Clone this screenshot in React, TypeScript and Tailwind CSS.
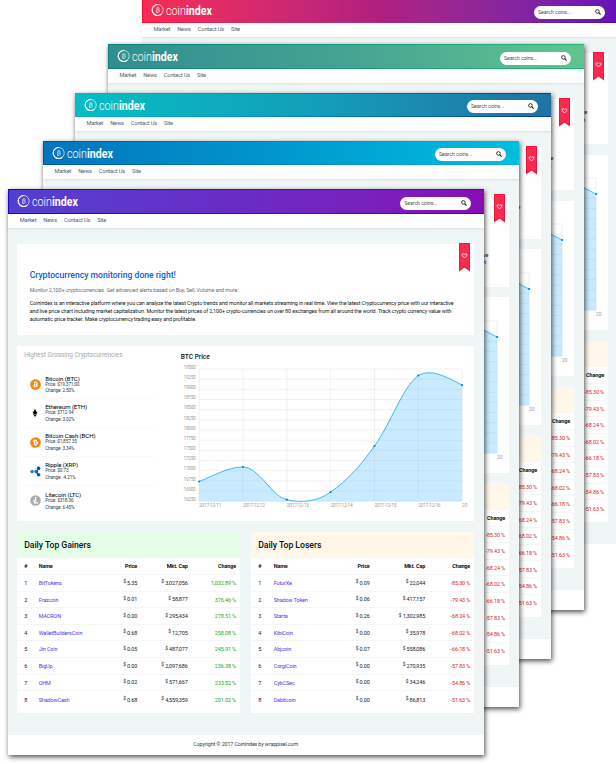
import React from "react";
import { FaBitcoin, FaEthereum } from "react-icons/fa";

type Theme = { pos: string; edge: string; fill: string; z: string };

const themes: Theme[] = [
  { pos: "left-[141.5px] top-[-2px]", edge: "from-[#ff0a35] to-[#5800a8]", fill: "from-[#f92c53] via-[#b01f80] to-[#6510b8]", z: "" },
  { pos: "left-[107.5px] top-[44px]", edge: "from-[#0c7f7c] to-[#22b877]", fill: "from-[#2f8f90] via-[#45a392] to-[#61c48f]", z: "shadow-[1px_2px_5px_rgba(0,0,0,0.7)]" },
  { pos: "left-[74.5px] top-[92.5px]", edge: "from-[#00bdc4] to-[#00409a]", fill: "from-[#05bdc4] via-[#129fb9] to-[#2072a5]", z: "shadow-[1px_2px_5px_rgba(0,0,0,0.7)]" },
  { pos: "left-[42.5px] top-[140.5px]", edge: "from-[#004fb5] to-[#00b5df]", fill: "from-[#0674bc] via-[#0098cd] to-[#00bfde]", z: "shadow-[1px_2px_5px_rgba(0,0,0,0.7)]" },
  { pos: "left-[7.7px] top-[189px]", edge: "from-[#1a08c4] to-[#5a00b4]", fill: "from-[#5140d0] via-[#6a2bc5] to-[#860db4]", z: "shadow-[1px_2px_5px_rgba(0,0,0,0.7)]" },
];

const gainers = [
  ["BitTokens", "5.35", "3,027,056", "1,032.89 %"],
  ["Frazcoin", "0.01", "58,877", "376.46 %"],
  ["MACRON", "0.00", "295,434", "278.51 %"],
  ["WalletBuildersCoin", "0.68", "12,705", "258.08 %"],
  ["Jin Coin", "0.05", "487,077", "245.91 %"],
  ["BigUp", "0.00", "2,097,686", "236.38 %"],
  ["OHM", "0.02", "571,667", "233.52 %"],
  ["ShadowCash", "0.68", "4,559,359", "201.02 %"],
];
const losers = [
  ["FuturXe", "0.09", "22,044", "-85.30 %"],
  ["Shadow Token", "0.06", "417,157", "-79.43 %"],
  ["Starta", "0.26", "1,302,985", "-68.24 %"],
  ["KibiCoin", "0.00", "35,978", "-68.02 %"],
  ["Abjcoin", "0.07", "558,086", "-66.18 %"],
  ["CorgiCoin", "0.00", "270,935", "-57.83 %"],
  ["CybCSec", "0.00", "34,246", "-54.86 %"],
  ["Debitcoin", "0.00", "86,813", "-51.63 %"],
];

function Logo() {
  return (
    <svg className="ml-[8px] block h-[16px] w-[66px]" viewBox="0 0 66 16">
      <circle cx="6.7" cy="8" r="5.5" fill="none" stroke="#fff" strokeWidth="0.8" opacity="0.85" />
      <path d="M6.7 2.5A5.5 5.5 0 1 0 10.4 12.1" fill="none" stroke="#fff" strokeWidth="1.1" />
      <path d="M5.6 6h1.7c1.5 0 1.5 1.9 0 2H5.7M7.3 8c1.7.1 1.6 2.2 0 2.2H5M6 5.9 5.4 10.2M7 5v.9M6.6 10.2v.9" fill="none" stroke="#fff" strokeWidth="0.55" />
      <text x="15" y="12.6" fontFamily="Roboto" fontSize="12" fill="#fff" fontWeight="300" textLength="20" lengthAdjust="spacingAndGlyphs">coin</text>
      <text x="35" y="12.6" fontFamily="Roboto" fontSize="12" fill="#fff" fontWeight="700" textLength="26" lengthAdjust="spacingAndGlyphs">index</text>
    </svg>
  );
}

function Header({ t }: { t: Theme }) {
  return (
    <div className={`h-[24.5px] bg-linear-to-r py-px pl-px ${t.edge}`}>
      <div className={`flex h-full items-center justify-between bg-linear-to-r ${t.fill}`}>
        <Logo />
        <div className="mr-[13px] mt-[4px] flex h-[13px] w-[71px] items-center justify-between rounded-full bg-white pl-[4.5px] pr-[4px]">
          <span className="text-[5.3px] leading-none tracking-[-0.09px] text-[#555]">Search coins...</span>
          <svg className="-mt-px size-[6px]" viewBox="0 0 6 6" fill="none" stroke="#222">
            <circle cx="2.4" cy="2.4" r="1.8" strokeWidth="0.9" />
            <path d="M3.7 3.7 5.6 5.6" strokeWidth="1.1" />
          </svg>
        </div>
      </div>
    </div>
  );
}

function Nav() {
  return (
    <div className="flex h-[14px] items-center gap-[7px] bg-white pl-[12px] text-[5.7px] leading-none tracking-[-0.17px] text-[#56616d] shadow-[0_1px_2px_rgba(0,0,0,0.09)]">
      <span>Market</span>
      <span>News</span>
      <span>Contact Us</span>
      <span>Site</span>
    </div>
  );
}

function Ribbon() {
  return (
    <svg className="absolute right-[4px] top-[-1px] h-[29px] w-[11px]" viewBox="0 0 11 29">
      <path d="M0 0H11V28.5L5.5 24.5 0 28.5Z" fill="#fb1238" />
      <path d="M1 1H10V26L5.5 23 1 26Z" fill="#f82a50" />
      <path d="M5.5 15 3.3 12.7C2.3 11.3 4.3 9.8 5.5 11.5 6.7 9.8 8.7 11.3 7.7 12.7Z" fill="none" stroke="#fff" strokeWidth="0.8" />
    </svg>
  );
}

function Intro() {
  return (
    <section className="relative h-[91.5px] bg-white pl-[12.5px] pt-[26.5px]">
      <Ribbon />
      <h1 className="text-[8.6px] font-medium leading-[11px] text-[#0a60d0]">Cryptocurrency monitoring done right!</h1>
      <p className="mt-[4.5px] whitespace-nowrap text-[5.4px] leading-[8px] tracking-[-0.11px] text-[#66717c]">Monitor 2,100+ cryptocurrencies. Get advanced alerts based on Buy, Sell, Volume and more.</p>
      <p className="mt-[6.5px] whitespace-nowrap text-[5.4px] leading-[7.75px] tracking-[-0.11px] text-[#101820]">
        CoinIndex is an interactive platform where you can analyze the latest Crypto trends and monitor all markets streaming in real time. View the latest Cryptocurrency price with our interactive<br />
        and live price chart including market capitalization. Monitor the latest prices of 2,100+ crypto-currencies on over 80 exchanges from all around the world. Track crypto currency value with<br />
        automatic price tracker. Make cryptocurrency trading easy and profitable.
      </p>
    </section>
  );
}

const Ripple = () => (
  <svg className="size-[11px]" viewBox="0 0 11 11">
    <path d="M6.6 5.6 8 3M6.6 5.6 8 8.6" stroke="#1467b0" strokeWidth="1.2" fill="none" />
    <circle cx="2.1" cy="5.6" r="1.8" fill="#1689d0" />
    <circle cx="6.3" cy="5.6" r="1.9" fill="#1467b0" />
    <circle cx="8.6" cy="2.4" r="1.8" fill="#0c4da0" />
    <circle cx="8.6" cy="8.7" r="1.8" fill="#1058b0" />
  </svg>
);

const Litecoin = () => (
  <svg className="size-[11px]" viewBox="0 0 11 11">
    <circle cx="5.5" cy="5.5" r="5.3" fill="#adadad" />
    <path d="M5.9 2 4.5 7.9H8M3.2 6.3 6.6 4.9" stroke="#fff" strokeWidth="1.1" fill="none" />
  </svg>
);

const coins = [
  { name: "Bitcoin (BTC)", price: "$19,371.00", change: "2.50%", icon: <FaBitcoin className="size-[11px] text-[#f7850f]" /> },
  { name: "Ethereum (ETH)", price: "$712.94", change: "3.02%", icon: <FaEthereum className="size-[8px] text-black" /> },
  { name: "Bitcoin Cash (BCH)", price: "$1,857.35", change: "3.34%", icon: <FaBitcoin className="size-[11px] -rotate-30 text-[#f7850f]" /> },
  { name: "Ripple (XRP)", price: "$0.73", change: "-4.21%", icon: <Ripple /> },
  { name: "Litecoin (LTC)", price: "$318.36", change: "6.45%", icon: <Litecoin /> },
];

function Coins() {
  return (
    <div className="w-[163.5px] pl-[7px] pt-[5.5px]">
      <h2 className="text-[6.5px] leading-[8px] tracking-[-0.07px] text-[#a0abb1]">Highest Grossing Cryptocurrencies</h2>
      <div className="mt-[11.5px] w-[132px]">
        {coins.map((c) => (
          <div key={c.name} className="flex h-[28.9px] items-center border-b border-[#f7f9fa] pl-[5.5px] last:border-0">
            <div className="flex w-[11px] justify-center">{c.icon}</div>
            <div className="ml-[4.5px] pt-px text-[4.7px] leading-[6.9px] tracking-[-0.12px] text-[#2c3c50]">
              <div className="text-[6.1px] leading-[7px] tracking-[-0.09px] text-black">{c.name}</div>
              <div>Price: {c.price}</div>
              <div>Change: {c.change}</div>
            </div>
          </div>
        ))}
      </div>
    </div>
  );
}

const points = [[0, 112.5], [43.8, 98], [87.7, 130.7], [131.5, 123], [175.4, 77], [219.2, 6.5], [263, 16]];
const curve = "C14 107 29 98 43.8 98C60 98 72 127 87.7 130.7C102 134 118 133 131.5 123C148 112 162 96 175.4 77C192 54 203 19 219.2 6.5C233 -1 249 9 263 16";

function Chart() {
  return (
    <div className="pt-[7.5px]">
      <h2 className="text-[6.6px] font-medium leading-[8px] text-[#111]">BTC Price</h2>
      <svg className="block h-[152px] w-[290px]" viewBox="0 0 290 152">
        <g transform="translate(18.1 8)">
          <g stroke="#ededed" strokeWidth="0.8">
            {Array.from({ length: 14 }, (_, i) => (
              <path key={i} d={`M0 ${i * 10.17}H263`} />
            ))}
            {points.map(([x]) => (
              <path key={x} d={`M${x} 0V132.2`} />
            ))}
          </g>
          <path d={`M0 112.5${curve}V132.2H0Z`} fill="#5abfff" opacity="0.33" />
          <path d={`M0 112.5${curve}`} fill="none" stroke="#2fb0f2" strokeWidth="0.9" />
          {points.map(([x, y]) => (
            <circle key={x} cx={x} cy={y} r="1.1" fill="#0782e0" />
          ))}
          <g fontFamily="Roboto" fontSize="4.8" fill="#a0a0a0">
            {Array.from({ length: 14 }, (_, i) => (
              <text key={i} x="-3.3" y={i * 10.17 - 0.3} textAnchor="end" textLength="12.3">{19500 - i * 250}</text>
            ))}
            {[11, 12, 13, 14, 15, 16].map((d, i) => (
              <text key={d} x={i * 43.85} y="137.9" textLength="22">{`2017-12-${d}`}</text>
            ))}
            <text x="263" y="137.9">20</text>
          </g>
        </g>
      </svg>
    </div>
  );
}

function Ranking({ title, rows, tint, tone, cols, width }: { title: string; rows: string[][]; tint: string; tone: string; cols: string; width: string }) {
  return (
    <section className={`h-[181.5px] bg-white ${width}`}>
      <h2 className={`flex h-[26.5px] items-center pl-[7px] pt-[2px] text-[8.7px] font-medium leading-none tracking-[-0.05px] text-[#0b120b] ${tint}`}>{title}</h2>
      <div className={`grid h-[17px] items-center border-b border-[#f5f7f7] pt-[2px] text-[5.5px] font-bold leading-none tracking-[-0.15px] text-[#111] ${cols}`}>
        <span>#</span>
        <span>Name</span>
        <span className="text-right">Price</span>
        <span className="text-right">Mkt. Cap</span>
        <span className="text-right">Change</span>
      </div>
      {rows.map((r, i) => (
        <div key={r[0]} className={`grid h-[16.6px] items-center whitespace-nowrap border-b border-[#f5f7f7] pt-[2px] text-[5.5px] leading-none tracking-[-0.14px] text-[#1a222a] last:border-0 ${cols}`}>
          <span>{i + 1}</span>
          <span className="text-[#5136ea]">{r[0]}</span>
          <span className="text-right"><span className="relative -top-[1.5px] text-[4.8px]">$</span> {r[1]}</span>
          <span className="text-right"><span className="relative -top-[1.5px] text-[4.8px]">$</span> {r[2]}</span>
          <span className={`text-right ${tone}`}>{r[3]}</span>
        </div>
      ))}
    </section>
  );
}

function Page({ t }: { t: Theme }) {
  return (
    <div className={`absolute flex h-[566px] w-[476px] flex-col bg-[#f0f5f6] ${t.pos} ${t.z}`}>
      <Header t={t} />
      <Nav />
      <main className="flex flex-1 flex-col px-[9.5px] pt-[16px]">
        <Intro />
        <section className="mt-[10.5px] flex h-[175.5px] bg-white">
          <Coins />
          <Chart />
        </section>
        <div className="mt-[10.5px] flex justify-between">
          <Ranking title="Daily Top Gainers" rows={gainers} tint="bg-[#e6fde8]" tone="text-[#20a92b]" width="w-[222.5px]" cols="grid-cols-[14.5px_57.5px_41px_50.5px_48.3px] pl-[7px]" />
          <Ranking title="Daily Top Losers" rows={losers} tint="bg-[#fff7e9]" tone="text-[#dc2430]" width="w-[223px]" cols="grid-cols-[15.5px_57px_39px_55.5px_45px] pl-[7px]" />
        </div>
      </main>
      <footer className="flex h-[20px] items-center justify-center bg-white text-[5.4px] leading-none tracking-[-0.13px] text-[#35404c]">Copyright © 2017 CoinIndex by wrappixel.com</footer>
    </div>
  );
}

export default function App() {
  return (
    <div className="relative h-[764px] w-[616px] overflow-hidden bg-white font-['Roboto',sans-serif]">
      {themes.map((t) => (
        <Page key={t.pos} t={t} />
      ))}
    </div>
  );
}
